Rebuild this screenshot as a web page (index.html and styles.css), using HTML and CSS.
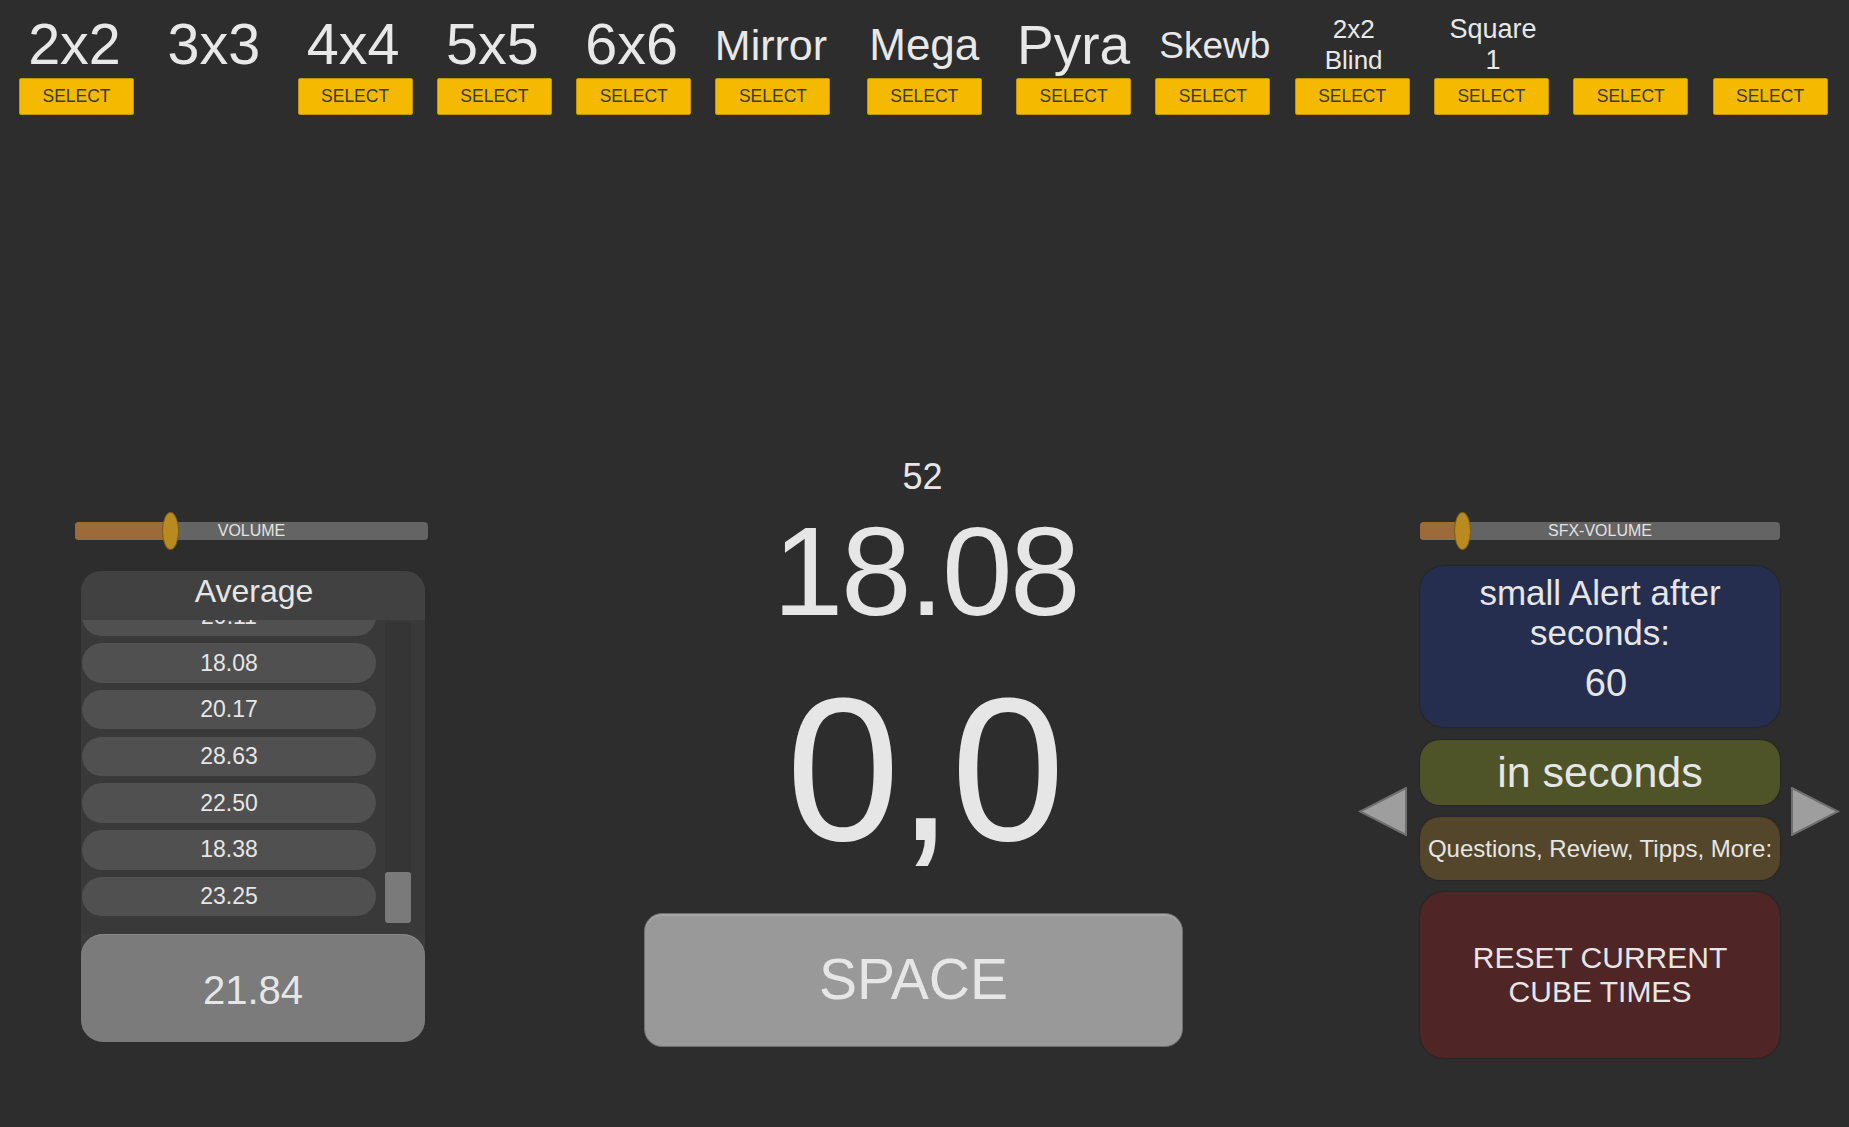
FILE: index.html
```html
<!DOCTYPE html>
<html lang="en">
<head>
<meta charset="utf-8">
<title>Cube Timer</title>
<link rel="stylesheet" href="styles.css">
</head>
<body>
<header class="cubes">
  <div class="cube"><div class="cube-label">2x2</div><button class="cube-btn">SELECT</button></div>
  <div class="cube"><div class="cube-label">3x3</div></div>
  <div class="cube"><div class="cube-label">4x4</div><button class="cube-btn">SELECT</button></div>
  <div class="cube"><div class="cube-label">5x5</div><button class="cube-btn">SELECT</button></div>
  <div class="cube"><div class="cube-label">6x6</div><button class="cube-btn">SELECT</button></div>
  <div class="cube"><div class="cube-label cube-label--mirror">Mirror</div><button class="cube-btn">SELECT</button></div>
  <div class="cube cube--mega"><div class="cube-label cube-label--mega">Mega</div><button class="cube-btn">SELECT</button></div>
  <div class="cube cube--pyra"><div class="cube-label cube-label--pyra">Pyra</div><button class="cube-btn">SELECT</button></div>
  <div class="cube"><div class="cube-label cube-label--skewb">Skewb</div><button class="cube-btn">SELECT</button></div>
  <div class="cube"><div class="cube-label cube-label--two cube-label--blind">2x2<br>Blind</div><button class="cube-btn">SELECT</button></div>
  <div class="cube"><div class="cube-label cube-label--two cube-label--square">Square<br>1</div><button class="cube-btn">SELECT</button></div>
  <div class="cube"><div class="cube-label"></div><button class="cube-btn">SELECT</button></div>
  <div class="cube"><div class="cube-label"></div><button class="cube-btn">SELECT</button></div>
</header>

<main class="main">
  <section class="col-left">
    <div class="slider">
      <div class="slider-track">
        <div class="slider-fill slider-fill--vol"></div>
        <span class="slider-label">VOLUME</span>
        <div class="slider-handle slider-handle--vol"></div>
      </div>
    </div>
    <div class="avg-panel">
      <div class="avg-head">Average</div>
      <div class="avg-list">
        <div class="rows">
          <div class="row row--first">20.11</div>
          <div class="row">18.08</div>
          <div class="row">20.17</div>
          <div class="row">28.63</div>
          <div class="row">22.50</div>
          <div class="row">18.38</div>
          <div class="row">23.25</div>
        </div>
        <div class="scroll-track"><div class="scroll-thumb"></div></div>
      </div>
      <div class="avg-total">21.84</div>
    </div>
  </section>

  <section class="col-center">
    <div class="readout">
      <div class="count">52</div>
      <div class="last-time">18.08</div>
      <div class="timer">0,0</div>
    </div>
    <button class="space-btn">SPACE</button>
  </section>

  <section class="col-right">
    <div class="slider slider--right">
      <div class="slider-track">
        <div class="slider-fill slider-fill--sfx"></div>
        <span class="slider-label">SFX-VOLUME</span>
        <div class="slider-handle slider-handle--sfx"></div>
      </div>
    </div>
    <div class="alert-box">
      <div class="alert-text">small Alert after<br>seconds:</div>
      <div class="alert-value">60</div>
    </div>
    <div class="nav">
      <svg class="arrow" width="49" height="49" viewBox="0 0 49 49"><polygon points="48,1 48,48 2,24.5" fill="#9e9e9e" stroke="#6f6f6f" stroke-width="2" stroke-linejoin="miter"/></svg>
      <div class="nav-boxes">
        <div class="unit-box">in seconds</div>
        <div class="info-box">Questions, Review, Tipps, More:</div>
      </div>
      <svg class="arrow" width="49" height="49" viewBox="0 0 49 49"><polygon points="1,1 1,48 47,24.5" fill="#9e9e9e" stroke="#6f6f6f" stroke-width="2" stroke-linejoin="miter"/></svg>
    </div>
    <button class="reset-box">RESET CURRENT<br>CUBE TIMES</button>
  </section>
</main>
</body>
</html>
```

FILE: styles.css
```css
* { box-sizing: border-box; }

html, body {
  margin: 0;
  padding: 0;
}

body {
  width: 1849px;
  height: 1127px;
  overflow: hidden;
  background: #2d2d2d;
  color: #e6e6e6;
  font-family: "Liberation Sans", Arial, sans-serif;
}

button {
  font-family: inherit;
  border: none;
  padding: 0;
  margin: 0;
  cursor: pointer;
}

/* ---------- top cube selector ---------- */
.cubes {
  display: flex;
  align-items: flex-start;
  gap: 24.3px;
  padding: 12px 0 0 19px;
  height: 115px;
}

.cube {
  width: 115px;
  flex: 0 0 115px;
  display: flex;
  flex-direction: column;
}

.cube--mega { margin-left: 12px; }
.cube--pyra { margin-left: 10px; }

.cube-label {
  height: 66px;
  display: flex;
  align-items: center;
  justify-content: center;
  text-align: center;
  white-space: nowrap;
  font-size: 57.5px;
  line-height: 1;
  padding-right: 4px;
  color: #e8e8e8;
}

.cube-label--mirror { font-size: 43px; padding-right: 4px; }
.cube-label--mega { font-size: 44px; padding-right: 0; }
.cube-label--pyra { font-size: 55px; padding-right: 0; }
.cube-label--skewb { font-size: 37px; padding-right: 0; padding-left: 4px; }
.cube-label--two { line-height: 31px; padding-right: 0; }
.cube-label--blind { font-size: 26px; padding-left: 3px; }
.cube-label--square { font-size: 27px; padding-left: 3px; }

.cube-btn {
  height: 37px;
  width: 115px;
  background: #f5b900;
  border: 1px solid #c39500;
  border-radius: 2px;
  color: #3a3a3a;
  font-size: 17.5px;
  display: flex;
  align-items: center;
  justify-content: center;
}

/* ---------- main area ---------- */
.main {
  display: flex;
  align-items: flex-start;
}

.col-left {
  margin-left: 75px;
  width: 353px;
  flex: 0 0 353px;
  padding-top: 397px;
}

.col-center {
  margin-left: 216px;
  width: 539px;
  flex: 0 0 539px;
  padding-top: 343.5px;
}

.col-right {
  margin-left: 175px;
  width: 482px;
  flex: 0 0 482px;
  padding-top: 397px;
}

/* ---------- sliders ---------- */
.slider {
  height: 38px;
  display: flex;
  align-items: center;
}

.slider--right { margin: 0 60px 0 62px; }

.slider-track {
  position: relative;
  width: 100%;
  height: 18.5px;
  border-radius: 4px;
  background: #646464;
  display: flex;
  align-items: center;
  justify-content: center;
}

.slider-fill {
  position: absolute;
  left: 0;
  top: 0;
  bottom: 0;
  border-radius: 4px 0 0 4px;
  background: #9d6a3b;
}

.slider-fill--vol { width: 92px; }
.slider-fill--sfx { width: 42px; }

.slider-label {
  position: relative;
  font-size: 16px;
  line-height: 1;
  color: #e2e2e2;
}

.slider-handle {
  position: absolute;
  top: -10px;
  width: 17px;
  height: 38px;
  border-radius: 50%;
  background: #b98a1f;
  border: 1px solid #7d5c12;
}

.slider-handle--vol { left: 87px; }
.slider-handle--sfx { left: 34px; }

/* ---------- average panel ---------- */
.avg-panel {
  margin: 21px 3px 0 6px;
  background: #3b3b3b;
  border-radius: 20px 20px 22px 22px;
}

.avg-head {
  height: 49px;
  padding-top: 3.6px;
  background: #414141;
  border-radius: 20px 20px 0 0;
  text-align: center;
  font-size: 32px;
  line-height: 32px;
  padding-left: 2px;
}

.avg-list {
  height: 314px;
  overflow: hidden;
  display: flex;
  align-items: flex-start;
  padding-left: 1px;
  background: #393939;
}

.rows {
  flex: 0 0 294px;
  display: flex;
  flex-direction: column;
  gap: 7.2px;
}

.row {
  height: 39.5px;
  flex: 0 0 39.5px;
  border-radius: 20px;
  background: #505050;
  display: flex;
  align-items: center;
  justify-content: center;
  font-size: 23px;
  line-height: 1;
}

.row--first { margin-top: -23.4px; }

.scroll-track {
  margin: 1.7px 0 0 9px;
  width: 26px;
  height: 301.6px;
  background: #353535;
  border-radius: 3px;
  display: flex;
  flex-direction: column;
  justify-content: flex-end;
}

.scroll-thumb {
  height: 51.5px;
  border-radius: 3px;
  background: #7a7a7a;
}

.avg-total {
  height: 108px;
  border-radius: 22px;
  background: #7b7b7b;
  box-shadow: inset 0 1px 0 #868686;
  display: flex;
  align-items: center;
  justify-content: center;
  padding-top: 3px;
  font-size: 40px;
  line-height: 1;
}

/* ---------- center ---------- */
.readout {
  padding-left: 18px;
  text-align: center;
  line-height: 1;
}

.count { font-size: 36px; height: 36px; }

.last-time {
  margin-top: 13.6px;
  font-size: 127px;
  height: 127px;
  letter-spacing: -2.5px;
  padding-left: 6px;
}

.timer {
  margin-top: 31.3px;
  font-size: 205px;
  height: 205px;
  letter-spacing: -3px;
  padding-left: 3px;
}

.space-btn {
  display: flex;
  align-items: center;
  justify-content: center;
  margin-top: 41.6px;
  width: 539px;
  height: 134px;
  border-radius: 18px;
  background: #999999;
  border: 1px solid #6f6f6f;
  box-shadow: inset 0 2px 0 #a6a6a6;
  color: #e6e6e6;
  font-size: 57px;
  line-height: 1;
}

/* ---------- right ---------- */
.alert-box {
  margin: 15.7px 60px 0 62px;
  height: 161px;
  border-radius: 24px;
  background: #262e4f;
  box-shadow: 0 0 2px rgba(0, 0, 0, 0.45);
  padding-top: 7px;
  text-align: center;
}

.alert-text {
  font-size: 35px;
  line-height: 40px;
}

.alert-value {
  margin-top: 7.7px;
  padding-left: 12px;
  font-size: 38px;
  line-height: 46px;
}

.nav {
  display: flex;
  align-items: center;
  margin-top: 13.3px;
}

.arrow {
  flex: 0 0 49px;
  margin-top: 3px;
}

.nav-boxes {
  flex: 0 0 360px;
  margin: 0 11px 0 13px;
  display: flex;
  flex-direction: column;
  gap: 12.3px;
}

.unit-box {
  height: 65px;
  border-radius: 20px;
  background: #4f5328;
  box-shadow: 0 0 2px rgba(0, 0, 0, 0.45);
  display: flex;
  align-items: center;
  justify-content: center;
  font-size: 43px;
  line-height: 1;
}

.info-box {
  height: 62.7px;
  border-radius: 20px;
  background: #54462a;
  box-shadow: 0 0 2px rgba(0, 0, 0, 0.45);
  display: flex;
  align-items: center;
  justify-content: center;
  font-size: 24px;
  line-height: 1;
  white-space: nowrap;
}

.reset-box {
  display: flex;
  align-items: center;
  justify-content: center;
  margin: 12.3px 60px 0 62px;
  width: 360px;
  height: 166px;
  border-radius: 24px;
  background: #4f2526;
  box-shadow: 0 0 2px rgba(0, 0, 0, 0.45);
  color: #e6e6e6;
  font-size: 30px;
  line-height: 34px;
  text-align: center;
}
```
